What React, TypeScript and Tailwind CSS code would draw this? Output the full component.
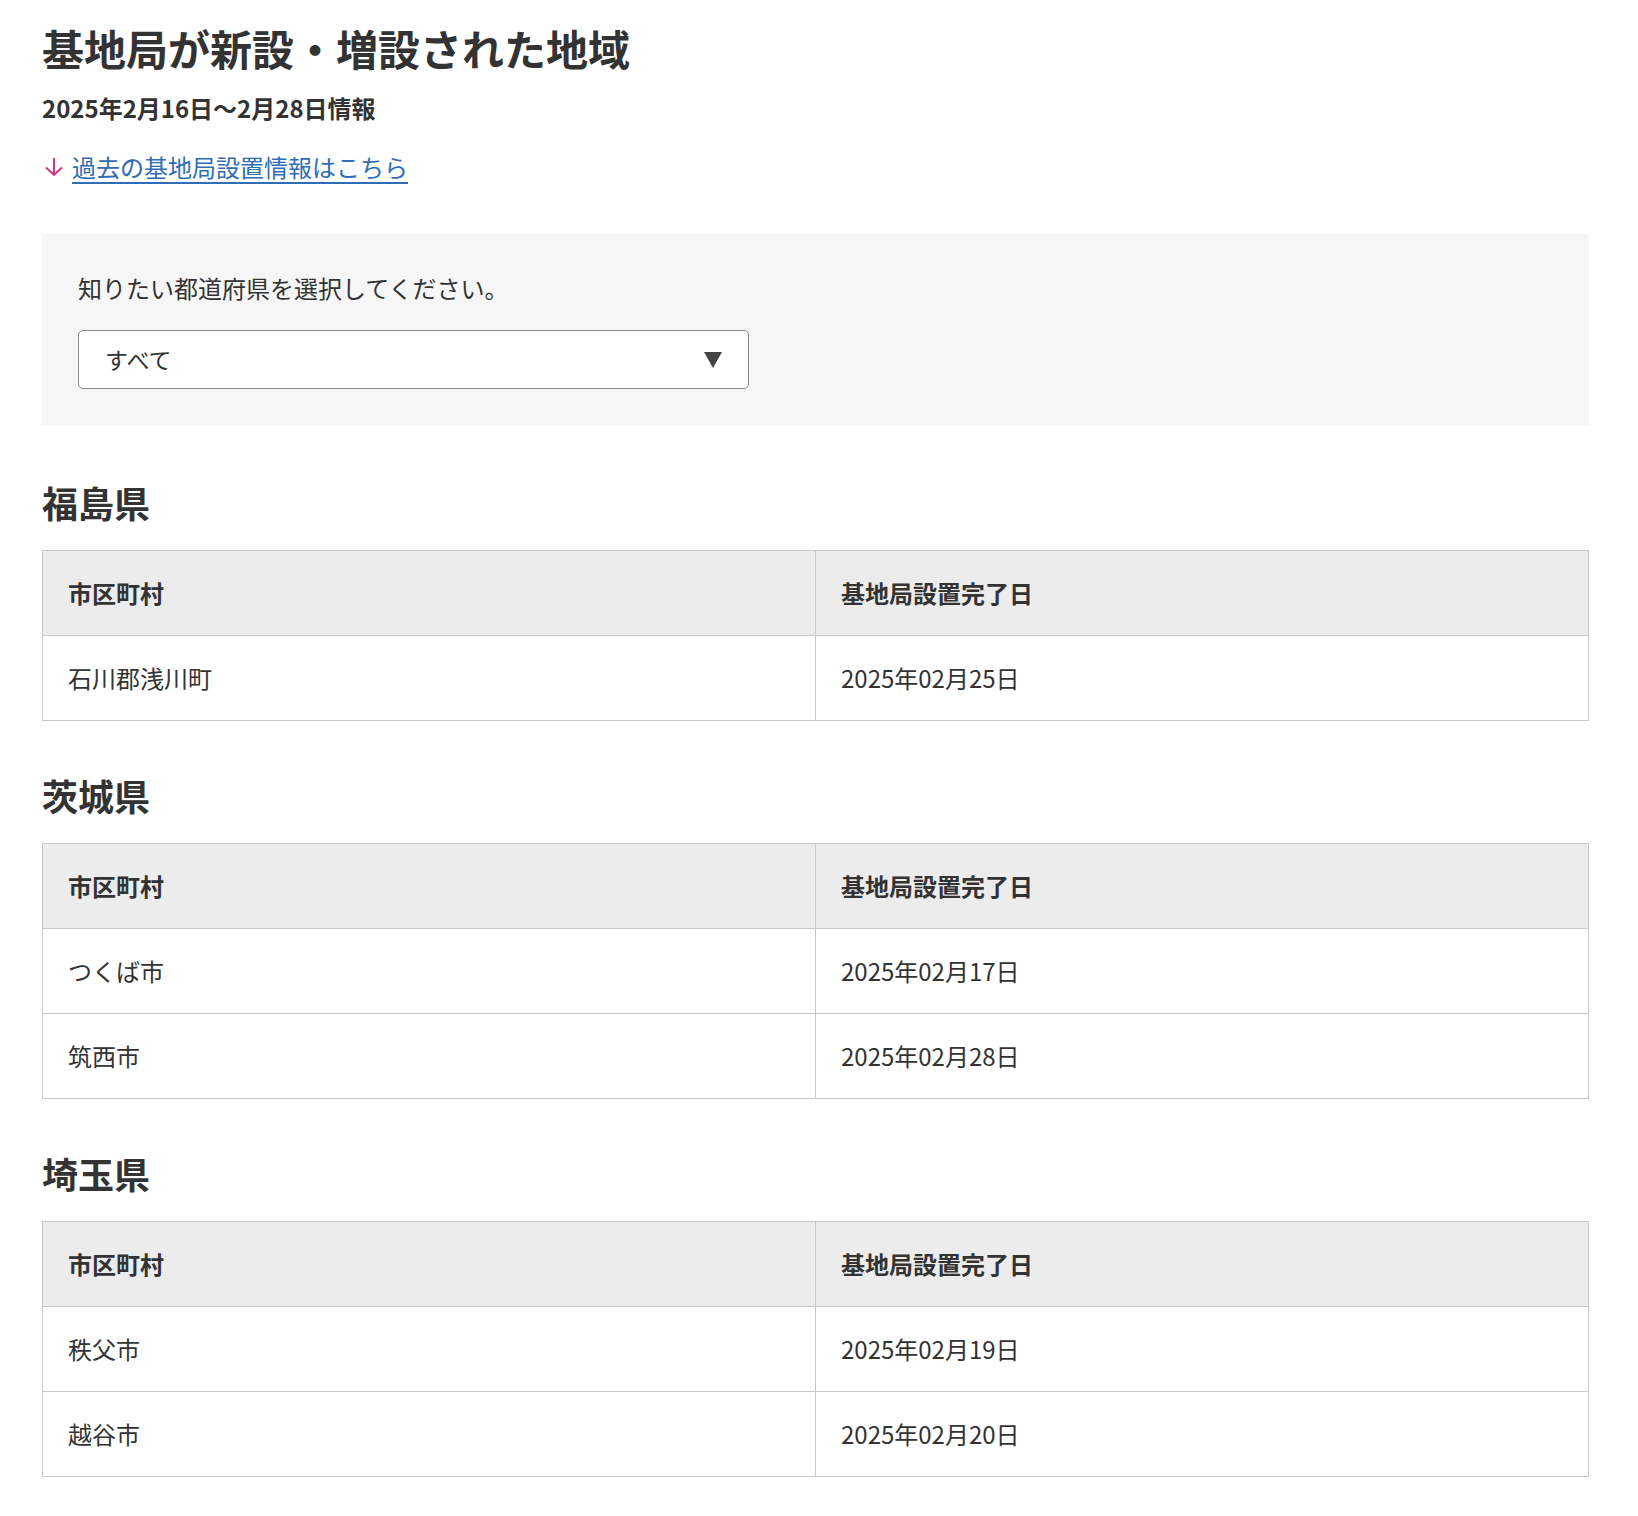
import React from "react";

const sections = [
  { pref: "福島県", rows: [["石川郡浅川町", "2025年02月25日"]] },
  {
    pref: "茨城県",
    rows: [
      ["つくば市", "2025年02月17日"],
      ["筑西市", "2025年02月28日"],
    ],
  },
  {
    pref: "埼玉県",
    rows: [
      ["秩父市", "2025年02月19日"],
      ["越谷市", "2025年02月20日"],
    ],
  },
];

function Table({ rows }: { rows: string[][] }) {
  return (
    <table className="w-full border-collapse border border-[#c8c8c8] table-fixed">
      <thead>
        <tr className="bg-[#ececec]">
          <th className="w-1/2 border border-[#c8c8c8] h-[85px] px-[25px] text-left text-[24px] font-bold leading-[36px]">
            市区町村
          </th>
          <th className="w-1/2 border border-[#c8c8c8] h-[85px] px-[25px] text-left text-[24px] font-bold leading-[36px]">
            基地局設置完了日
          </th>
        </tr>
      </thead>
      <tbody>
        {rows.map((r, i) => (
          <tr key={i}>
            <td className="border border-[#c8c8c8] h-[85px] px-[25px] text-[24px] leading-[36px]">{r[0]}</td>
            <td className="border border-[#c8c8c8] h-[85px] px-[25px] text-[24px] leading-[36px]">{r[1]}</td>
          </tr>
        ))}
      </tbody>
    </table>
  );
}

export default function App() {
  return (
    <div
      className="bg-white text-[#333] min-h-[1516px]"
      style={{ fontFamily: '"Noto Sans CJK JP", "Noto Sans", sans-serif' }}
    >
      <div className="ml-[42px] w-[1547px] pt-[18px] pb-[40px]">
        <h1 className="text-[42px] font-bold leading-[60px]">基地局が新設・増設された地域</h1>
        <p className="mt-[12px] text-[24px] font-bold leading-[36px]">2025年2月16日〜2月28日情報</p>
        <div className="mt-[23px] flex items-center leading-[36px]">
          <svg width="22" height="20" viewBox="0 0 22 20" className="mr-[7px] ml-[1px]" fill="none">
            <path d="M11 1 V18 M3 10.5 L11 18 L19 10.5" stroke="#d63384" strokeWidth="2" />
          </svg>
          <a href="#" className="text-[24px] text-[#2f6db5] underline underline-offset-[5px] decoration-[1.5px]">
            過去の基地局設置情報はこちら
          </a>
        </div>
        <div className="mt-[49px] bg-[#f6f6f6] p-[36px]">
          <p className="text-[24px] leading-[36px]">知りたい都道府県を選択してください。</p>
          <div className="mt-[24px] w-[671px] h-[59px] bg-white border border-[#8a8a8a] rounded-[5px] flex items-center justify-between pl-[26px] pr-[26px]">
            <span className="text-[23px]">すべて</span>
            <svg width="18" height="16" viewBox="0 0 18 16">
              <path d="M0 0 H18 L9 16 Z" fill="#444" />
            </svg>
          </div>
        </div>
        {sections.map((s, idx) => (
          <section key={s.pref} className={idx === 0 ? "mt-[50px]" : "mt-[47px]"}>
            <h2 className="text-[36px] font-bold leading-[54px] mb-[21px]">{s.pref}</h2>
            <Table rows={s.rows} />
          </section>
        ))}
      </div>
    </div>
  );
}
